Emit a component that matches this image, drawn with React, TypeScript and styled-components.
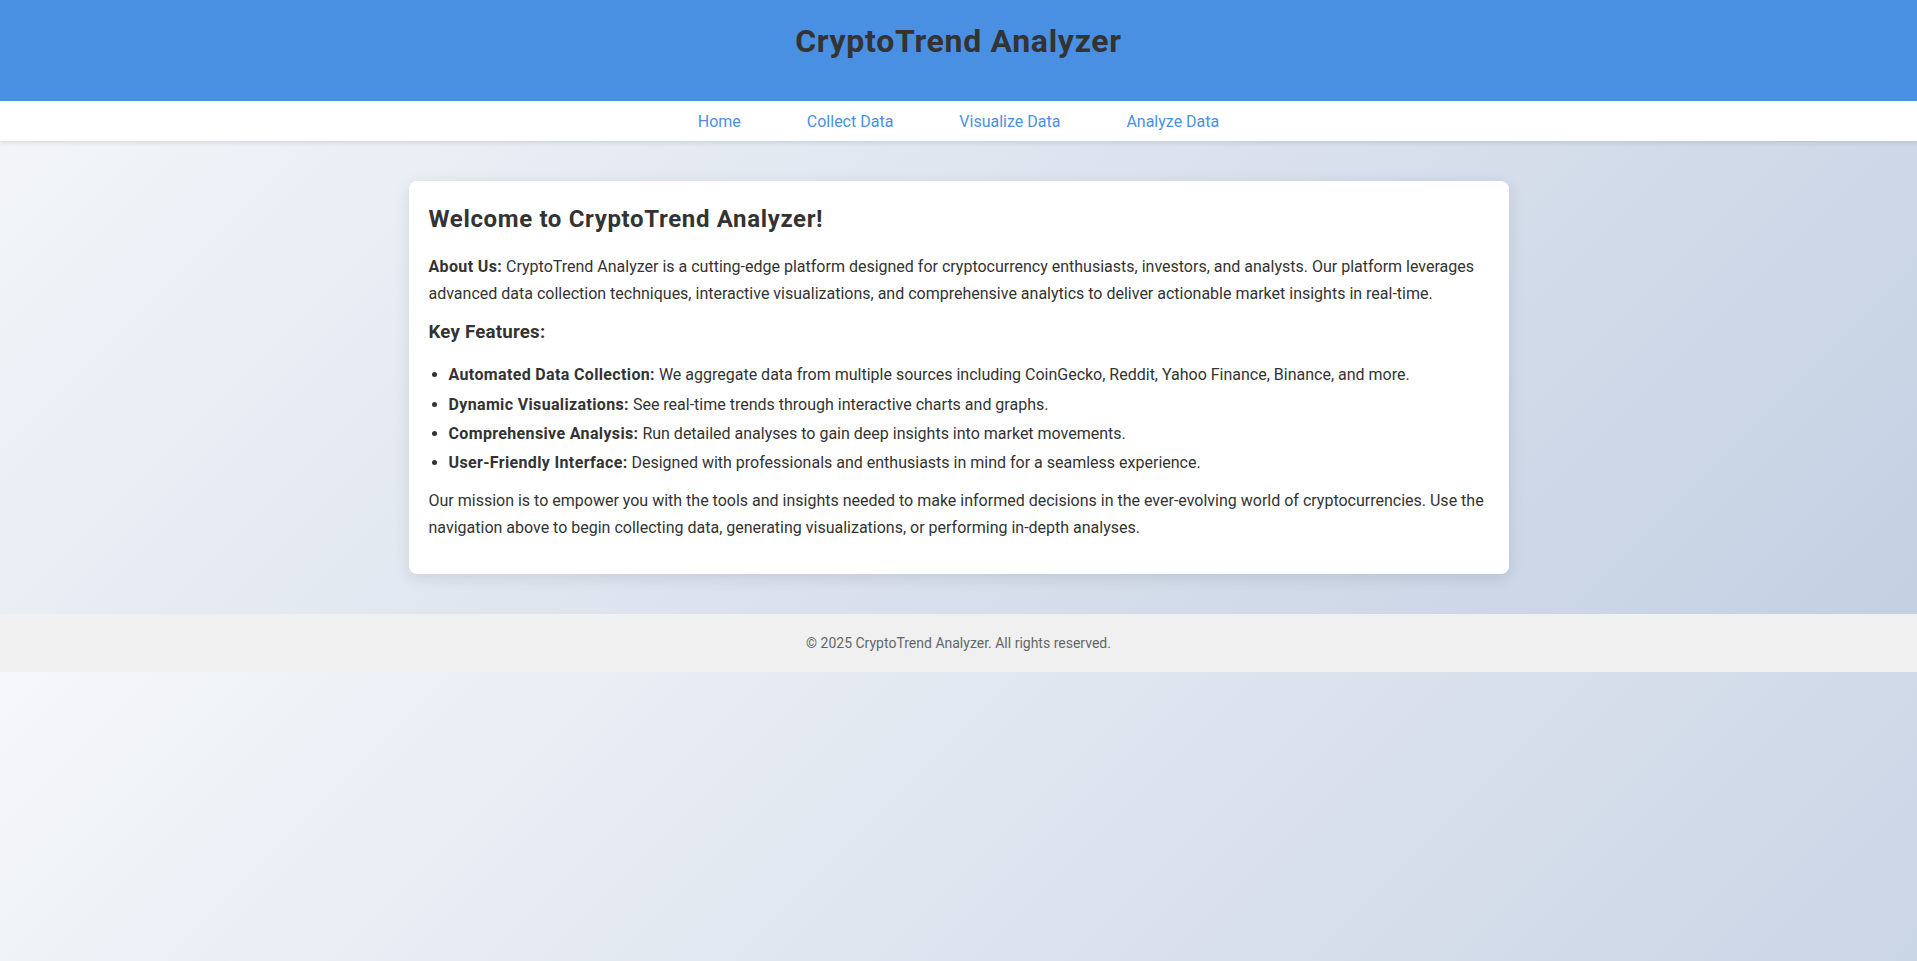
import React from "react";
import styled, { createGlobalStyle } from "styled-components";

const GlobalStyle = createGlobalStyle`
  * { box-sizing: border-box; }
  body {
    margin: 0;
    font-family: Roboto, "Noto Sans", "Liberation Sans", sans-serif;
    color: #333333;
    background: linear-gradient(135deg, #f5f7fa 0%, #c3cfe2 100%);
  }
`;

const Header = styled.header`
  background: #4a90e2;
  height: 100.5px;
  padding-top: 21.5px;
  text-align: center;
`;

const Title = styled.h1`
  margin: 0;
  font-size: 32px;
  line-height: 38px;
  font-weight: 700;
  letter-spacing: 0.7px;
  color: #333333;
`;

const Nav = styled.nav`
  position: relative;
  z-index: 1;
  height: 40.5px;
  padding-top: 2px;
  background: #ffffff;
  box-shadow: 0 2px 4px rgba(0, 0, 0, 0.1);
  display: flex;
  justify-content: center;
  align-items: center;
  gap: 66px;
`;

const NavLink = styled.a`
  color: #4a90e2;
  text-decoration: none;
  font-size: 16px;
  line-height: 21px;
  cursor: pointer;
`;

const Main = styled.main`
  padding: 40px 0;
`;

const Card = styled.section`
  width: 1100px;
  margin: 0 auto;
  background: #ffffff;
  border-radius: 8px;
  padding: 20px;
  box-shadow: 0 4px 15px rgba(0, 0, 0, 0.1);
`;

const Heading = styled.h2`
  margin: 0 0 15px;
  font-size: 24px;
  line-height: 37px;
  font-weight: 700;
  letter-spacing: 0.65px;
`;

const SubHeading = styled.h3`
  margin: 0 0 16px;
  font-size: 18.7px;
  line-height: 26px;
  font-weight: 700;
  letter-spacing: 0.2px;
`;

const Paragraph = styled.p`
  margin: 0 0 12px;
  font-size: 16px;
  line-height: 27.2px;
`;

const Bold = styled.strong`
  font-weight: 700;
  letter-spacing: 0.35px;
`;

const List = styled.ul`
  margin: 0 0 11px;
  padding-left: 20px;
`;

const Item = styled.li`
  font-size: 16px;
  line-height: 27.2px;
  margin-bottom: 2px;
`;

const Footer = styled.footer`
  background: #f0f0f0;
  padding: 20px;
  text-align: center;
  font-size: 14px;
  line-height: 18.6px;
  color: #666666;
`;

const links = ["Home", "Collect Data", "Visualize Data", "Analyze Data"];

const features: [string, string][] = [
  [
    "Automated Data Collection:",
    "We aggregate data from multiple sources including CoinGecko, Reddit, Yahoo Finance, Binance, and more.",
  ],
  ["Dynamic Visualizations:", "See real-time trends through interactive charts and graphs."],
  ["Comprehensive Analysis:", "Run detailed analyses to gain deep insights into market movements."],
  ["User-Friendly Interface:", "Designed with professionals and enthusiasts in mind for a seamless experience."],
];

export default function App() {
  return (
    <>
      <GlobalStyle />
      <Header>
        <Title>CryptoTrend Analyzer</Title>
      </Header>
      <Nav>
        {links.map((l) => (
          <NavLink key={l} href="#">
            {l}
          </NavLink>
        ))}
      </Nav>
      <Main>
        <Card>
          <Heading>Welcome to CryptoTrend Analyzer!</Heading>
          <Paragraph>
            <Bold>About Us:</Bold> CryptoTrend Analyzer is a cutting-edge platform designed for cryptocurrency
            enthusiasts, investors, and analysts. Our platform leverages advanced data collection techniques,
            interactive visualizations, and comprehensive analytics to deliver actionable market insights in
            real-time.
          </Paragraph>
          <SubHeading>Key Features:</SubHeading>
          <List>
            {features.map(([b, t]) => (
              <Item key={b}>
                <Bold>{b}</Bold> {t}
              </Item>
            ))}
          </List>
          <Paragraph>
            Our mission is to empower you with the tools and insights needed to make informed decisions in the
            ever-evolving world of cryptocurrencies. Use the navigation above to begin collecting data, generating
            visualizations, or performing in-depth analyses.
          </Paragraph>
        </Card>
      </Main>
      <Footer>© 2025 CryptoTrend Analyzer. All rights reserved.</Footer>
    </>
  );
}
